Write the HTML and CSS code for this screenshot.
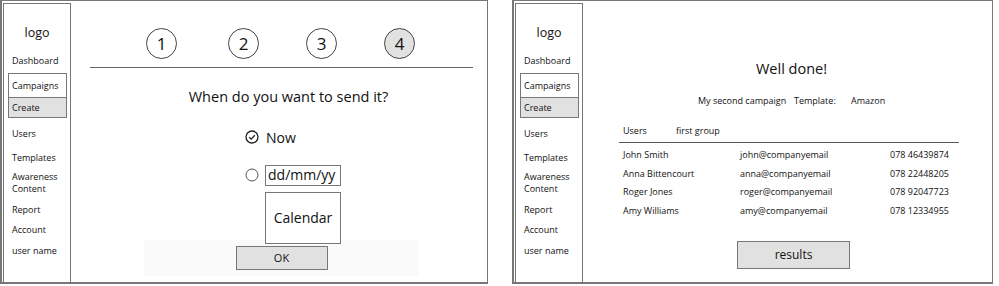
FILE: index.html
```html
<!doctype html>
<html>
<head>
<meta charset="utf-8">
<title>Campaign wizard</title>
<link rel="stylesheet" href="styles.css">
</head>
<body>
<div class="screens">
	<section class="frame frame-left">
		<nav class="sidebar">
			<div class="logo">logo</div>
			<a class="nav-item dash" href="#">Dashboard</a>
			<div class="nav-group">
				<a class="nav-cell" href="#">Campaigns</a>
				<a class="nav-cell current" href="#">Create</a>
			</div>
			<a class="nav-item users" href="#">Users</a>
			<a class="nav-item templates" href="#">Templates</a>
			<a class="nav-item awareness" href="#">Awareness<br>Content</a>
			<a class="nav-item report" href="#">Report</a>
			<a class="nav-item account" href="#">Account</a>
			<a class="nav-item username" href="#">user name</a>
		</nav>
		<div class="main wizard">
			<ol class="steps">
				<li>1</li>
				<li>2</li>
				<li>3</li>
				<li class="active">4</li>
			</ol>
			<hr class="rule">
			<h2 class="question">When do you want to send it?</h2>
			<div class="options">
				<label class="option">
					<svg class="radio" width="14" height="14" viewBox="0 0 14 14">
						<circle cx="7" cy="7" r="6" fill="none" stroke="#222" stroke-width="1.3"/>
						<path d="M4.2 7.2 L6.2 9.1 L9.8 5.2" fill="none" stroke="#222" stroke-width="1.3"/>
					</svg>
					<span>Now</span>
				</label>
				<label class="option later">
					<svg class="radio" width="14" height="14" viewBox="0 0 14 14">
						<circle cx="7" cy="7" r="6" fill="none" stroke="#555" stroke-width="1"/>
					</svg>
					<span class="date">dd/mm/yy</span>
				</label>
				<div class="calendar">Calendar</div>
			</div>
			<div class="footer">
				<a class="btn ok" href="#">OK</a>
			</div>
		</div>
	</section>

	<section class="frame frame-right">
		<nav class="sidebar">
			<div class="logo">logo</div>
			<a class="nav-item dash" href="#">Dashboard</a>
			<div class="nav-group">
				<a class="nav-cell" href="#">Campaigns</a>
				<a class="nav-cell current" href="#">Create</a>
			</div>
			<a class="nav-item users" href="#">Users</a>
			<a class="nav-item templates" href="#">Templates</a>
			<a class="nav-item awareness" href="#">Awareness<br>Content</a>
			<a class="nav-item report" href="#">Report</a>
			<a class="nav-item account" href="#">Account</a>
			<a class="nav-item username" href="#">user name</a>
		</nav>
		<div class="main summary">
			<h2 class="done">Well done!</h2>
			<div class="meta">
				<span class="campaign">My second campaign</span>
				<span class="tpl">Template:</span>
				<span>Amazon</span>
			</div>
			<div class="group">
				<span class="group-label">Users</span>
				<span>first group</span>
			</div>
			<div class="people">
				<span>John Smith</span><span>john@companyemail</span><span>078 46439874</span>
				<span>Anna Bittencourt</span><span>anna@companyemail</span><span>078 22448205</span>
				<span>Roger Jones</span><span>roger@companyemail</span><span>078 92047723</span>
				<span>Amy Williams</span><span>amy@companyemail</span><span>078 12334955</span>
			</div>
			<a class="btn results" href="#">results</a>
		</div>
	</section>
</div>
</body>
</html>
```

FILE: styles.css
```css
body {
	margin: 0;
	background: #fff;
	font-family: "Open Sans", "Noto Sans", sans-serif;
	color: #111;
}
a {
	color: #111;
	text-decoration: none;
}
.screens {
	display: flex;
	gap: 24px;
	align-items: flex-start;
}
.frame {
	display: flex;
	height: 284px;
	box-sizing: border-box;
	border: 1px solid #777;
	border-bottom-width: 2px;
	border-left-width: 2px;
}
.frame-left {
	width: 488px;
}
.frame-right {
	width: 481px;
}

/* sidebar */
.sidebar {
	width: 68px;
	height: 283px;
	margin: 2px 0 0 1px;
	box-sizing: border-box;
	border: 1px solid #777;
	border-bottom-width: 2px;
	display: flex;
	flex-direction: column;
	font-size: 9px;
	line-height: 12px;
	flex-shrink: 0;
}
.logo {
	margin-top: 21px;
	text-align: center;
	font-size: 12.5px;
	line-height: 16px;
}
.nav-item {
	padding-left: 8px;
}
.dash { margin-top: 14px; }
.users { margin-top: 10px; }
.templates { margin-top: 12px; }
.awareness { margin-top: 7px; line-height: 11.5px; }
.report { margin-top: 10px; }
.account { margin-top: 8px; }
.username { margin-top: 9px; }
.nav-group {
	margin: 6px 3px 0 4px;
	border: 1px solid #777;
}
.nav-cell {
	display: block;
	padding-left: 3px;
	line-height: 23px;
}
.nav-cell.current {
	background: #e1e1e1;
	border-top: 1px solid #777;
	line-height: 19px;
}

/* wizard */
.main {
	flex: 1;
	display: flex;
	flex-direction: column;
}
.steps {
	display: flex;
	gap: 47px;
	margin: 27px 0 0 75px;
	padding: 0;
	list-style: none;
}
.steps li {
	width: 29px;
	height: 29px;
	border: 1px solid #444;
	border-radius: 50%;
	text-align: center;
	font-size: 17px;
	line-height: 29px;
}
.steps li:first-child {
	margin-right: 4px;
}
.steps li.active {
	background: #e1e1e1;
}
.rule {
	margin: 8px 0 0 19px;
	width: 383px;
	border: 0;
	border-top: 1px solid #666;
}
.question {
	margin: 19px 0 0 19px;
	text-align: center;
	font-size: 14.5px;
	font-weight: normal;
	line-height: 20px;
}
.options {
	margin: 20px 0 0 174px;
	display: flex;
	flex-direction: column;
	font-size: 14px;
}
.option {
	display: flex;
	align-items: center;
	gap: 7px;
	height: 20px;
}
.option.later {
	margin-top: 18px;
	gap: 6px;
}
.date {
	border: 1px solid #777;
	line-height: 18px;
	padding-left: 2px;
	box-sizing: border-box;
	width: 76px;
	height: 21px;
}
.calendar {
	position: relative;
	z-index: 1;
	background: #fff;
	margin: 7px 0 0 20px;
	width: 76px;
	height: 52px;
	box-sizing: border-box;
	border: 1px solid #777;
	text-align: center;
	line-height: 50px;
}
.footer {
	margin: -4px 0 0 73px;
	width: 274px;
	height: 36px;
	background: #fafafa;
	display: flex;
	justify-content: center;
	padding-top: 6px;
	box-sizing: border-box;
	padding-left: 1px;
}
.btn {
	display: block;
	box-sizing: border-box;
	border: 1px solid #777;
	background: #e1e1e1;
	text-align: center;
}
.ok {
	width: 92px;
	height: 24px;
	font-size: 11px;
	line-height: 22px;
}

/* summary */
.done {
	margin: 58px 0 0 0;
	text-align: center;
	font-size: 14.5px;
	font-weight: normal;
	line-height: 20px;
	padding-left: 8px;
}
.meta,
.group,
.people {
	font-size: 9px;
	line-height: 12px;
}
.meta {
	display: flex;
	margin: 16px 0 0 115px;
}
.campaign { width: 96px; }
.tpl { width: 57px; }
.group {
	display: flex;
	margin: 18px 0 0 40px;
}
.group-label { width: 53px; }
.people {
	margin: 5px 0 0 36px;
	width: 340px;
	border-top: 1px solid #555;
	padding: 3px 0 0 4px;
	box-sizing: border-box;
	display: grid;
	grid-template-columns: 117px 150px auto;
	grid-auto-rows: 18.5px;
	align-items: center;
}
.results {
	margin: 21px 0 0 154px;
	width: 113px;
	height: 28px;
	font-size: 12px;
	line-height: 26px;
}
```
